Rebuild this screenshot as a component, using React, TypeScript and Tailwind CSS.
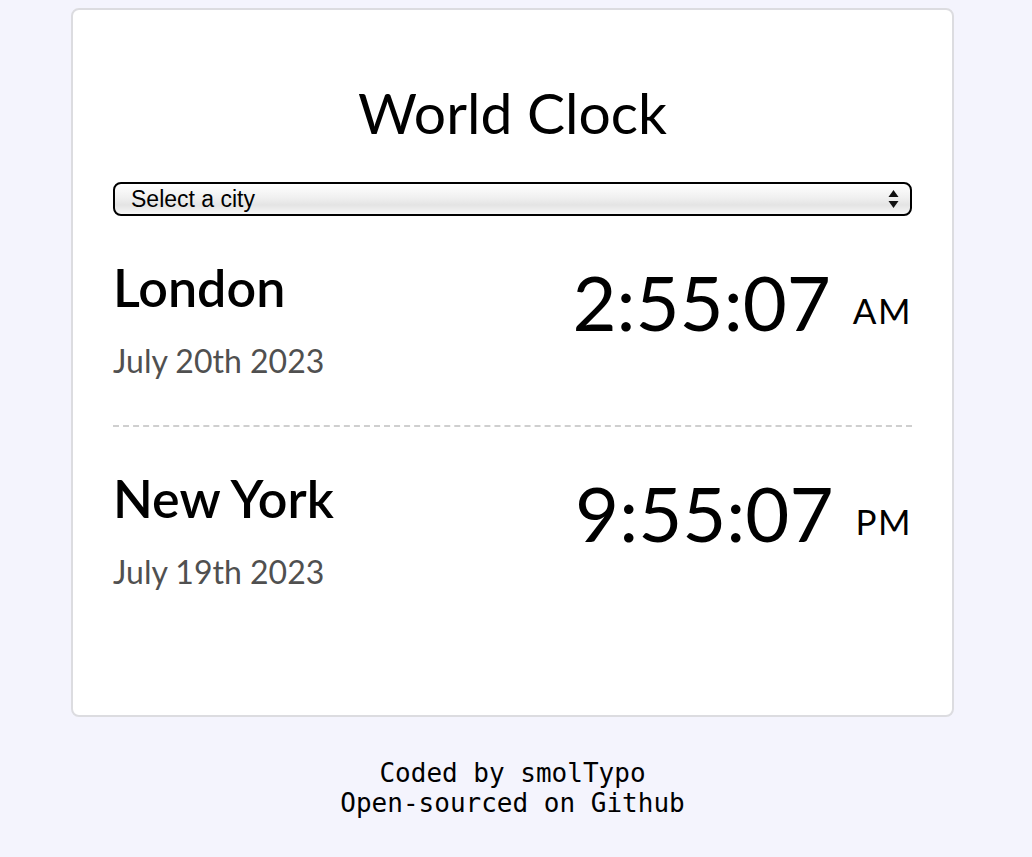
const cities = [
  { name: "London", date: "July 20th 2023", time: "2:55:07", period: "AM" },
  { name: "New York", date: "July 19th 2023", time: "9:55:07", period: "PM" },
];

function CityRow({ name, date, time, period }: (typeof cities)[number]) {
  return (
    <div className="flex items-start justify-between pt-[41px] pb-[46px]">
      <div className="flex flex-col">
        <div className="text-[52px] leading-[60px] font-semibold text-black">{name}</div>
        <div className="mt-[26px] text-[32px] leading-[36px] text-[#505050]">{date}</div>
      </div>
      <div className="flex items-start">
        <div className="text-[76px] leading-[88px] text-black mt-[1px]">{time}</div>
        <div className="ml-[22px] mt-[33px] text-[35px] leading-[40px] text-black tracking-[1.5px]">{period}</div>
      </div>
    </div>
  );
}

export default function App() {
  return (
    <div
      className="min-h-screen w-full bg-[#f4f4fd] pt-2 pr-[7px] flex flex-col items-center"
      style={{ fontFamily: "Lato, 'Open Sans', sans-serif" }}
    >
      <div className="w-[883px] rounded-lg border-2 border-[#dcdce0] bg-white px-10 pt-[66px] pb-[79px]">
        <h1 className="text-center text-[57px] leading-[72px] font-normal text-black">World Clock</h1>

        <div className="mt-[34px] relative flex h-[34px] items-center rounded-[8px] border-2 border-black bg-[linear-gradient(to_bottom,#ffffff_0%,#f0f0f0_45%,#e4e4e4_70%,#f6f6f6_100%)] pl-4">
          <span className="text-[23px] leading-none text-black" style={{ fontFamily: "'Liberation Sans', Arial, sans-serif" }}>
            Select a city
          </span>
          <svg className="absolute right-[11px] top-[6px]" width="11" height="18" viewBox="0 0 11 18">
            <path d="M5.5 0 L10.5 7 L0.5 7 Z" fill="#111" />
            <path d="M5.5 18 L10.5 11 L0.5 11 Z" fill="#111" />
          </svg>
        </div>

        <CityRow {...cities[0]} />
        <div className="border-t-2 border-dashed border-[#cfcfcf]" />
        <CityRow {...cities[1]} />
      </div>

      <div
        className="mt-[41px] text-center text-[26px] leading-[30px] text-black"
        style={{ fontFamily: "'DejaVu Sans Mono', monospace" }}
      >
        <div>Coded by smolTypo</div>
        <div>Open-sourced on Github</div>
      </div>
    </div>
  );
}
